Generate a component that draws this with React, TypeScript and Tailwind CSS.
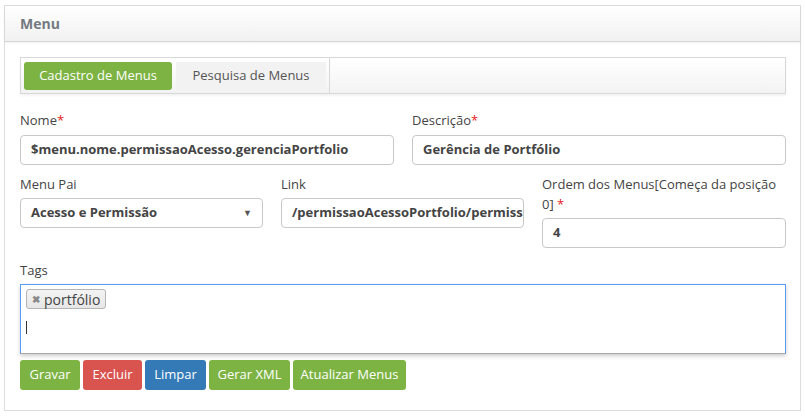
export default function App() {
  const label = 'block text-[13px] leading-5 text-[#444]'
  const input =
    'h-[30px] w-full rounded-[4px] border border-[#c8c8c8] bg-white px-[10px] text-[13px] font-bold text-[#444] flex items-center overflow-hidden whitespace-nowrap'
  const star = <span className="text-[#e02020]">*</span>

  return (
    <div className="min-h-screen bg-white pt-[5px] pl-[4px] pr-[4px] font-['Open_Sans',sans-serif]">
      <div className="h-[406px] w-[797px] border border-[#dcdcdc] bg-white">
        {/* Header */}
        <div className="h-[36px] border-b border-[#d6d6d6] bg-gradient-to-b from-white to-[#f1f1f1] pl-[15px] flex items-center shadow-[0_1px_3px_rgba(0,0,0,0.06)]">
          <h1 className="text-[14px] font-bold text-[#737980]">Menu</h1>
        </div>

        <div className="pl-[15px] pr-[14px] pt-[15px]">
          {/* Tabs */}
          <div className="flex h-[37px] items-center border border-[#d8d8d8] bg-gradient-to-b from-white to-[#f3f3f3] pl-[3px] shadow-[0_2px_2px_rgba(0,0,0,0.05)]">
            <div className="flex h-[28px] w-[148px] items-center justify-center rounded-[3px] bg-[#7cb342] text-[13px] text-white">
              Cadastro de Menus
            </div>
            <div className="flex h-[28px] items-center">
              <div className="ml-[4px] flex h-[28px] w-[150px] items-center justify-center bg-[#f2f2f2] text-[13px] text-[#555]">
                Pesquisa de Menus
              </div>
              <div className="ml-[3px] h-[36px] w-px bg-[#d8d8d8]" />
            </div>
          </div>

          {/* Row 1 */}
          <div className="mt-[16px] grid grid-cols-2 gap-x-[18px]">
            <div>
              <label className={label}>Nome{star}</label>
              <div className={`${input} mt-[5px]`}>$menu.nome.permissaoAcesso.gerenciaPortfolio</div>
            </div>
            <div>
              <label className={label}>Descrição{star}</label>
              <div className={`${input} mt-[5px] bg-[#eeeeee]`}>Gerência de Portfólio</div>
            </div>
          </div>

          {/* Row 2 */}
          <div className="mt-[9px] grid grid-cols-[243px_243px_1fr] gap-x-[18px]">
            <div>
              <label className={label}>Menu Pai</label>
              <div className={`${input} mt-[4px] justify-between`}>
                <span>Acesso e Permissão</span>
                <span className="text-[9px] text-[#555]">▼</span>
              </div>
            </div>
            <div>
              <label className={label}>Link</label>
              <div className={`${input} mt-[4px]`}>/permissaoAcessoPortfolio/permissaoAcessoPortfolio.load</div>
            </div>
            <div>
              <label className={label}>
                Ordem dos Menus[Começa da posição 0] {star}
              </label>
              <div className={`${input} mt-[4px]`}>4</div>
            </div>
          </div>

          {/* Tags */}
          <div className="mt-[12px]">
            <label className={label}>Tags</label>
            <div className="mt-[4px] flex h-[70px] flex-col items-start border border-[#5b9cf0] border-b-[#a9a9a9] bg-white px-[5px] pt-[4px] shadow-[0_2px_4px_rgba(0,0,0,0.2)]">
              <div className="flex h-[20px] items-center gap-[4px] rounded-[3px] border border-[#b5b5b5] bg-gradient-to-b from-[#f4f4f4] to-[#e6e6e6] px-[5px] text-[14px] text-[#444]">
                <span className="text-[10px] font-bold text-[#888]">✖</span>
                portfólio
              </div>
              <div className="mt-[12px] h-[13px] w-px bg-[#333]" />
            </div>
          </div>

          {/* Buttons */}
          <div className="mt-[6px] flex gap-[3px] text-[13px] text-white">
            <button className="h-[30px] w-[60px] rounded-[3px] bg-[#7cb342]">Gravar</button>
            <button className="h-[30px] w-[59px] rounded-[3px] bg-[#d9534f]">Excluir</button>
            <button className="h-[30px] w-[61px] rounded-[3px] bg-[#337ab7]">Limpar</button>
            <button className="h-[30px] w-[81px] rounded-[3px] bg-[#7cb342]">Gerar XML</button>
            <button className="h-[30px] w-[113px] rounded-[3px] bg-[#7cb342]">Atualizar Menus</button>
          </div>
        </div>
      </div>
    </div>
  )
}
